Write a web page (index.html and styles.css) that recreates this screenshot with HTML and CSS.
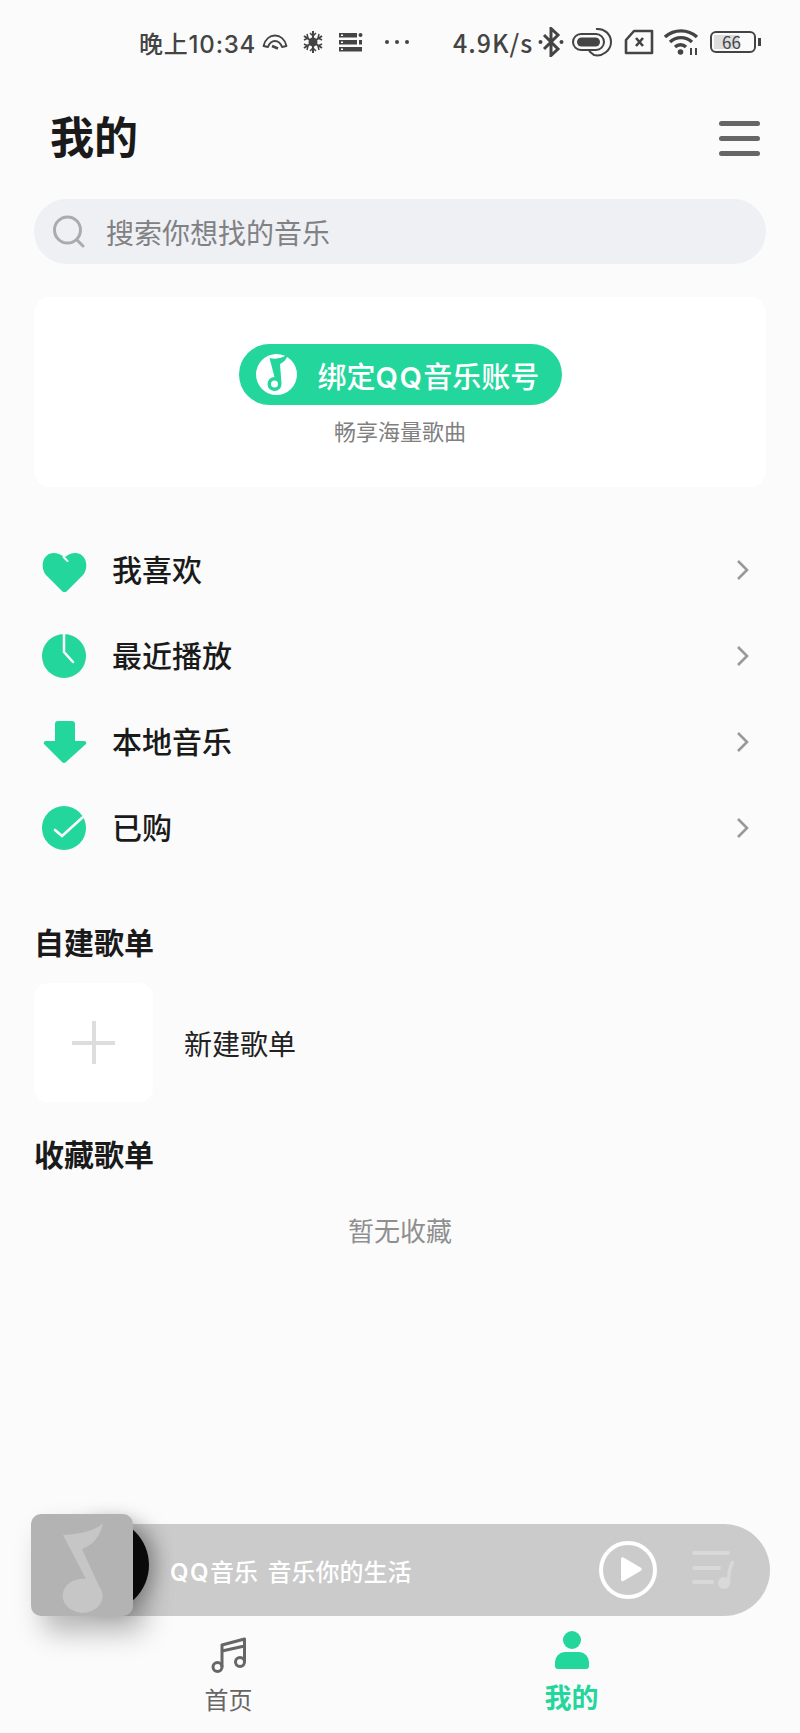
FILE: index.html
```html
<!DOCTYPE html>
<html lang="zh-CN">
<head>
  <meta charset="UTF-8">
  <title>我的</title>
  <link rel="stylesheet" href="styles.css">
</head>
<body>
  <div class="app">
    <div class="status">
      <span class="time">晚上10:34</span>
      <svg class="st-gauge" width="26" height="16" viewBox="0 0 26 16" fill="none" stroke="#444" stroke-width="1.800"><path d="M1.500 12C3 5 8 1.500 13 1.500S23 5 24.500 12L20 13C18.500 9 16 7 13 7S7.500 9 6 13Z" stroke-linejoin="round"/><path d="M10 12l6 2.500" stroke-width="2.600"/></svg>
      <svg class="st-snow" width="22" height="24" viewBox="0 0 22 24" fill="none" stroke="#444" stroke-width="2"><path d="M11 1v22M2 6l18 12M20 6L2 18"/><path d="M8 3l3 3 3-3M8 21l3-3 3 3M2 10l4-2-1-4M20 10l-4-2 1-4M2 14l4 2-1 4M20 14l-4 2 1 4" stroke-width="1.500"/><circle cx="11" cy="12" r="3.500" fill="#444"/></svg>
      <svg class="st-list" width="24" height="20" viewBox="0 0 24 20" fill="#444"><rect x="0" y="1" width="18" height="4.500"/><rect x="0" y="8" width="18" height="4.500"/><rect x="20" y="8" width="3" height="4.500"/><rect x="0" y="15" width="23" height="4.500"/><circle cx="21.500" cy="3" r="2"/><rect x="2" y="2.500" width="2" height="1.500" fill="#fff"/><rect x="2" y="9.500" width="2" height="1.500" fill="#fff"/><rect x="2" y="16.500" width="2" height="1.500" fill="#fff"/></svg>
      <span class="dots"><i></i><i></i><i></i></span>
      <span class="speed">4.9K/s</span>
      <svg class="st-bt" width="26" height="30" viewBox="0 0 26 30" fill="none" stroke="#444" stroke-width="3"><path d="M6 8l14 14-7 6.500V1.500L20 8 6 22"/><circle cx="2.500" cy="15" r="2" fill="#444" stroke="none"/><circle cx="23.500" cy="15" r="2" fill="#444" stroke="none"/></svg>
      <svg class="st-nfc" width="40" height="30" viewBox="0 0 40 30" fill="none" stroke="#444" stroke-width="2"><rect x="1" y="7" width="31" height="16" rx="8"/><rect x="5" y="10.500" width="23" height="9" rx="4.500" fill="#444" stroke="none"/><path d="M24 2c8-1 15 5 15 13s-8 15-17 13l-5-4"/></svg>
      <svg class="st-sim" width="30" height="26" viewBox="0 0 30 26" fill="none" stroke="#444" stroke-width="2.600"><path d="M10 2h18v22H2V11Z" stroke-linejoin="round"/><path d="M12 9l7 8M19 9l-7 8"/></svg>
      <svg class="st-wifi" width="36" height="28" viewBox="0 0 36 28" fill="none" stroke="#444" stroke-width="3.400"><path d="M1 9a24 24 0 0 1 32 0M6 14a16 16 0 0 1 22 0M11 19a8 8 0 0 1 11 0"/><circle cx="16.500" cy="24" r="2.800" fill="#444" stroke="none"/><path d="M27 20v7M32 20v7" stroke-width="2"/></svg>
      <div class="battery"><div class="battery-body"><span class="battery-fill"></span><span class="battery-num">66</span></div><span class="battery-tip"></span></div>
    </div>

    <div class="header">
      <h1>我的</h1>
      <div class="menu"><i></i><i></i><i></i></div>
    </div>

    <div class="search">
      <svg width="34" height="34" viewBox="0 0 34 34" fill="none" stroke="#a9abaf" stroke-width="3"><circle cx="15.500" cy="15" r="13"/><path d="M25 25l6 6" stroke-linecap="round"/></svg>
      <span>搜索你想找的音乐</span>
    </div>

    <div class="card">
      <div class="bind-btn">
        <svg width="41" height="41" viewBox="0 0 41 41"><circle cx="20.500" cy="20.500" r="20.500" fill="#fff"/><path d="M13.500 4C19 5.500 27 4.500 32 0c-1 5-4 8-8 10l1.500 20a7 7 0 1 1-7-7Z" fill="#23d69b"/><circle cx="18.500" cy="30" r="3.500" fill="#fff"/></svg>
        <span>绑定<b class="latin">QQ</b>音乐账号</span>
      </div>
      <p class="bind-sub">畅享海量歌曲</p>
    </div>

    <ul class="list">
      <li class="row">
        <svg width="46" height="46" viewBox="0 0 46 46"><path d="M23.500 45C22 45 21.500 44.500 20.500 43.500L5 28C-1 21 1 7 12 6C17 5.500 21 8 23.500 10.500C26 8 30 5.500 35 6C46 7 48 21 42 28L26.500 43.500C25.500 44.500 25 45 23.500 45Z" fill="#23d69b"/><path d="M22.500 10l4 4" fill="none" stroke="#fbfbfb" stroke-width="2" stroke-linecap="round"/></svg>
        <span class="row-text">我喜欢</span>
        <svg class="chev" width="14" height="22" viewBox="0 0 14 22" fill="none" stroke="#999" stroke-width="2.600"><path d="M2 2l9 9-9 9"/></svg>
      </li>
      <li class="row">
        <svg width="46" height="46" viewBox="0 0 46 46"><circle cx="23" cy="23" r="22" fill="#23d69b"/><path d="M23 1v18l9 10" fill="none" stroke="#fbfbfb" stroke-width="2.500" stroke-linecap="round"/></svg>
        <span class="row-text">最近播放</span>
        <svg class="chev" width="14" height="22" viewBox="0 0 14 22" fill="none" stroke="#999" stroke-width="2.600"><path d="M2 2l9 9-9 9"/></svg>
      </li>
      <li class="row">
        <svg width="46" height="46" viewBox="0 0 46 46"><path d="M14 5a3 3 0 0 1 3-3h14a3 3 0 0 1 3 3v17h9c2 0 3 2 2 3L25 43a3 3 0 0 1-4 0L3 25c-1-1 0-3 2-3h9Z" fill="#23d69b"/></svg>
        <span class="row-text">本地音乐</span>
        <svg class="chev" width="14" height="22" viewBox="0 0 14 22" fill="none" stroke="#999" stroke-width="2.600"><path d="M2 2l9 9-9 9"/></svg>
      </li>
      <li class="row">
        <svg width="46" height="46" viewBox="0 0 46 46"><circle cx="23" cy="23" r="22" fill="#23d69b"/><path d="M14 25l7 6 21-19" fill="none" stroke="#fbfbfb" stroke-width="2.600" stroke-linecap="round"/></svg>
        <span class="row-text">已购</span>
        <svg class="chev" width="14" height="22" viewBox="0 0 14 22" fill="none" stroke="#999" stroke-width="2.600"><path d="M2 2l9 9-9 9"/></svg>
      </li>
    </ul>

    <h2 class="section-title">自建歌单</h2>
    <div class="new-list">
      <div class="plus"></div>
      <span>新建歌单</span>
    </div>

    <h2 class="section-title second">收藏歌单</h2>
    <p class="empty">暂无收藏</p>

    <div class="spacer"></div>

    <div class="player">
      <div class="pill">
        <span class="song"><span class="latin">QQ</span>音乐 音乐你的生活</span>
        <svg class="play" width="58" height="58" viewBox="0 0 58 58"><circle cx="29" cy="29" r="27" fill="none" stroke="#fff" stroke-width="4"/><path d="M22 18c0-1.500 1-2 2.500-1.500l17 10c1.500 1 1.500 2.500 0 3.500l-17 10c-1.500.5-2.500 0-2.500-1.500Z" fill="#fff"/></svg>
        <svg class="queue" width="42" height="38" viewBox="0 0 42 38" fill="#d9d9d9"><rect x="0" y="0" width="38" height="4" rx="2"/><rect x="0" y="15" width="29" height="4" rx="2"/><rect x="0" y="29" width="22" height="4" rx="2"/><circle cx="32" cy="32" r="6"/><path d="M36.500 32C36.500 24 37 17 40.500 11.500" fill="none" stroke="#d9d9d9" stroke-width="3.500" stroke-linecap="round"/></svg>
      </div>
      <div class="disc"></div>
      <div class="album">
        <svg width="102" height="102" viewBox="0 0 102 102"><path d="M32 21c20-1 33-5 40-12-3 14-10 22-21 26l17 37a20 17 0 1 1-13-7L32 21Z" fill="#c6c6c6"/></svg>
      </div>
    </div>

    <div class="tabs">
      <div class="tab">
        <svg width="36" height="36" viewBox="0 0 36 36" fill="none" stroke="#666" stroke-width="3"><circle cx="6.500" cy="30" r="4.500"/><circle cx="29" cy="25" r="4.500"/><path d="M11 30V8L33.500 2v23M11 14l22.500-5" stroke-linejoin="round"/></svg>
        <span>首页</span>
      </div>
      <div class="tab active">
        <svg width="36" height="38" viewBox="0 0 36 38" fill="#23d69b"><circle cx="18" cy="9" r="9"/><path d="M1 31a10 10 0 0 1 10-10h14a10 10 0 0 1 10 10v4a3 3 0 0 1-3 3H4a3 3 0 0 1-3-3Z"/></svg>
        <span>我的</span>
      </div>
    </div>
  </div>
</body>
</html>
```

FILE: styles.css
```css
* {
  box-sizing: border-box;
}

body {
  margin: 0;
  background: #fbfbfb;
  font-family: "Noto Sans CJK SC", "Noto Sans", sans-serif;
  color: #1a1a1a;
}

.app {
  height: 1733px;
  display: flex;
  flex-direction: column;
  overflow: hidden;
}

.latin {
  font-family: Inter, "Noto Sans CJK SC", sans-serif;
  font-weight: 600;
  letter-spacing: 1.5px;
}

/* status bar */
.status {
  height: 84px;
  display: flex;
  align-items: center;
  padding-left: 139px;
  color: #444;
}

.time {
  font-family: Inter, "Noto Sans CJK SC", sans-serif;
  font-size: 24px;
  font-weight: 500;
  letter-spacing: 0.8px;
  width: 117px;
  white-space: nowrap;
}

.st-gauge { margin-left: 6px; }
.st-snow { margin-left: 14px; }
.st-list { margin-left: 15px; }

.dots {
  display: flex;
  gap: 6px;
  margin-left: 22px;
}

.dots i {
  width: 4px;
  height: 4px;
  border-radius: 50%;
  background: #444;
}

.speed {
  font-size: 25px;
  font-weight: 500;
  letter-spacing: 1px;
  margin-left: 44px;
  width: 85px;
  white-space: nowrap;
}

.st-bt { margin-left: 0; }
.st-nfc { margin-left: 8px; }
.st-sim { margin-left: 12px; }
.st-wifi { margin-left: 10px; }

.battery {
  display: flex;
  align-items: center;
  margin-left: 10px;
}

.battery-body {
  position: relative;
  width: 46px;
  height: 22px;
  border: 2.5px solid #444;
  border-radius: 6px;
  padding: 2px;
}

.battery-fill {
  display: block;
  width: 66%;
  height: 100%;
  background: #ddd;
}

.battery-num {
  position: absolute;
  left: 10px;
  top: -3px;
  font-size: 17px;
  line-height: 24px;
  color: #444;
}

.battery-tip {
  width: 3px;
  height: 8px;
  background: #444;
  margin-left: 2px;
}

/* header */
.header {
  height: 60px;
  margin-top: 24px;
  padding: 0 40px 0 50px;
  display: flex;
  align-items: center;
  justify-content: space-between;
}

h1 {
  margin: 0 0 6px;
  font-size: 44px;
  font-weight: 700;
  line-height: 60px;
}

.menu {
  display: flex;
  flex-direction: column;
  gap: 10px;
}

.menu i {
  display: block;
  width: 41px;
  height: 5px;
  border-radius: 3px;
  background: #666;
}

/* search */
.search {
  height: 65px;
  margin: 31px 34px 0;
  padding-left: 18px;
  display: flex;
  align-items: center;
  gap: 20px;
  border-radius: 33px;
  background: #eef0f4;
  font-size: 28px;
  color: #808185;
}

/* bind card */
.card {
  height: 190px;
  margin: 33px 34px 0;
  padding-top: 47px;
  display: flex;
  flex-direction: column;
  align-items: center;
  border-radius: 16px;
  background: #fff;
}

.bind-btn {
  width: 323px;
  height: 61px;
  padding-left: 17px;
  display: flex;
  align-items: center;
  gap: 21px;
  border-radius: 31px;
  background: #23d69b;
  color: #fff;
  font-size: 29px;
  font-weight: 500;
  white-space: nowrap;
}

.bind-sub {
  margin: 9px 0 0;
  font-size: 22px;
  line-height: 32px;
  color: #808080;
}

/* rows */
.list {
  list-style: none;
  margin: 40px 0 0;
  padding: 0 50px 0 41px;
}

.row {
  height: 86px;
  display: flex;
  align-items: center;
}

.row-text {
  flex: 1;
  margin-left: 25px;
  padding-bottom: 4px;
  font-size: 30px;
  font-weight: 500;
}

.section-title {
  margin: 48px 0 2px 34px;
  font-size: 30px;
  font-weight: 700;
  line-height: 44px;
}

.section-title.second {
  margin-top: 29px;
  margin-bottom: 1px;
}

.new-list {
  margin: 18px 34px 0;
  display: flex;
  align-items: center;
  gap: 31px;
  font-size: 28px;
  color: #222;
}

.plus {
  position: relative;
  width: 119px;
  height: 119px;
  border-radius: 14px;
  background: #fff;
}

.plus::before,
.plus::after {
  content: "";
  position: absolute;
  background: #ddd;
}

.plus::before {
  left: 38px;
  top: 58px;
  width: 43px;
  height: 4px;
}

.plus::after {
  left: 58px;
  top: 38px;
  width: 4px;
  height: 43px;
}

.empty {
  margin: 34px 0 0;
  text-align: center;
  font-size: 26px;
  line-height: 40px;
  color: #8f8f8f;
}

.spacer {
  flex: 1;
}

/* player */
.player {
  position: relative;
  height: 92px;
  margin: 0 30px 0 31px;
}

.pill {
  height: 92px;
  margin-left: 40px;
  padding-left: 99px;
  display: flex;
  align-items: center;
  border-radius: 0 46px 46px 0;
  background: #cbcbcb;
}

.song {
  flex: 1;
  font-size: 24px;
  font-weight: 500;
  word-spacing: 4px;
  color: #fff;
  white-space: nowrap;
}

.play {
  margin-right: 35px;
}

.queue {
  margin-right: 36px;
}

.disc {
  position: absolute;
  left: 24px;
  top: -6px;
  width: 94px;
  height: 94px;
  border-radius: 50%;
  background: radial-gradient(circle, #0c0c0c 72%, #4a4a4a 90%, #1c1c1c 100%);
  box-shadow: 8px 0 18px rgba(0, 0, 0, 0.22);
}

.album {
  position: absolute;
  left: 0;
  top: -10px;
  width: 102px;
  height: 102px;
  border-radius: 10px;
  background: #b3b3b3;
  box-shadow: 12px 16px 28px rgba(0, 0, 0, 0.28);
}

.album svg {
  display: block;
}

/* bottom tabs */
.tabs {
  height: 117px;
  padding: 0 57px;
  display: grid;
  grid-template-columns: 343px 343px;
}

.tab {
  display: flex;
  flex-direction: column;
  align-items: center;
  padding-top: 21px;
  font-size: 24px;
  line-height: 36px;
  color: #666;
}

.tab span {
  margin-top: 8px;
}

.tab.active {
  padding-top: 15px;
  font-size: 27px;
  font-weight: 700;
  color: #23d69b;
}

.tab.active span {
  margin-top: 10px;
}
```
